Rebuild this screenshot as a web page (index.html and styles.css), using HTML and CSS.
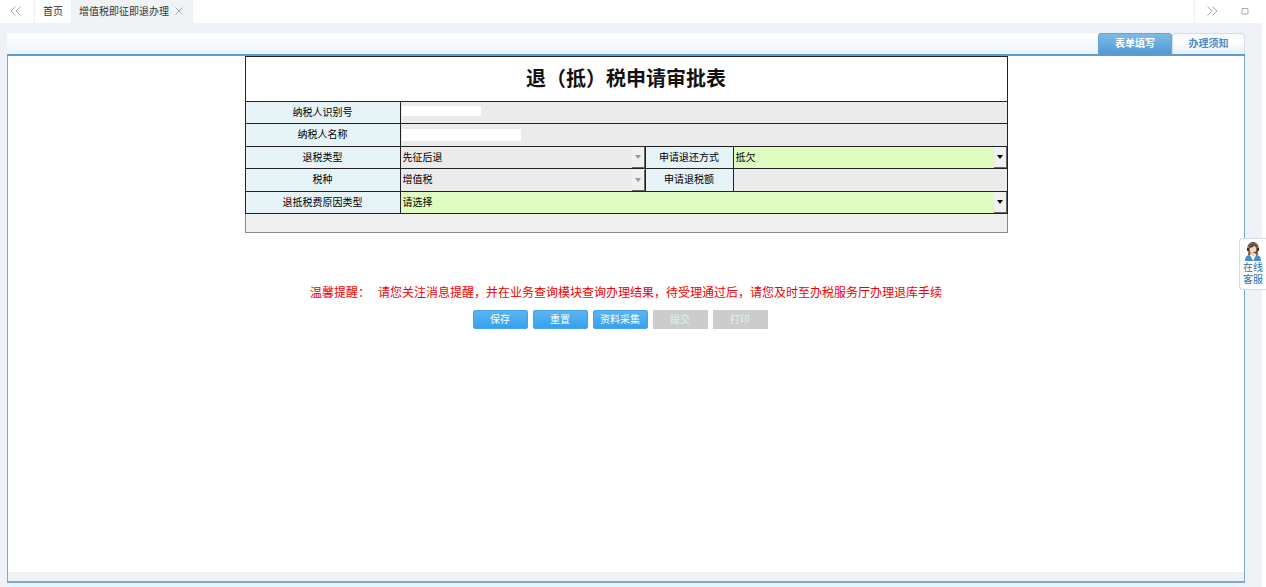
FILE: index.html
```html
<!DOCTYPE html>
<html lang="zh-CN">
<head>
<meta charset="utf-8">
<meta name="viewport" content="width=device-width, initial-scale=1">
<title>增值税即征即退办理</title>
<link rel="stylesheet" href="styles.css">
</head>
<body>
<header class="topbar">
  <button class="icon-btn scroll-left" type="button" aria-label="向左滚动">
    <svg width="12" height="10" viewBox="0 0 12 10"><path d="M5.500 .5 1 5l4.500 4.500M10.500 .5 6 5l4.500 4.500"/></svg>
  </button>
  <nav class="pages">
    <a class="page-tab" href="#">首页</a>
    <div class="page-tab current">
      <a href="#">增值税即征即退办理</a>
      <button class="icon-btn" type="button" aria-label="关闭">
        <svg width="8" height="8" viewBox="0 0 8 8"><path d="M.5 .5l7 7M7.500 .5l-7 7"/></svg>
      </button>
    </div>
  </nav>
  <div class="window-tools">
    <button class="icon-btn" type="button" aria-label="向右滚动">
      <svg width="12" height="10" viewBox="0 0 12 10"><path d="M1.500 .5 6 5l-4.500 4.500M6.500 .5 11 5l-4.500 4.500"/></svg>
    </button>
    <button class="icon-btn" type="button" aria-label="最大化">
      <svg width="8" height="8" viewBox="0 0 8 8"><path d="M1 1.500h6v5.500H1z"/></svg>
    </button>
  </div>
</header>

<div class="workspace">
  <nav class="form-tabs">
    <button class="form-tab active" type="button">表单填写</button>
    <button class="form-tab" type="button">办理须知</button>
  </nav>
  <main class="panel">
    <form class="sheet">
      <table class="form-table">
        <colgroup><col class="col-label"><col class="col-value"><col class="col-label2"><col></colgroup>
        <tbody>
          <tr class="title-row"><td colspan="4"><h1>退（抵）税申请审批表</h1></td></tr>
          <tr>
            <th><label for="taxpayer-id">纳税人识别号</label></th>
            <td colspan="3" class="readonly"><div class="field"><input id="taxpayer-id" class="masked" type="text" readonly></div></td>
          </tr>
          <tr>
            <th><label for="taxpayer-name">纳税人名称</label></th>
            <td colspan="3" class="readonly"><div class="field"><input id="taxpayer-name" class="masked wide" type="text" readonly></div></td>
          </tr>
          <tr>
            <th><label for="refund-type">退税类型</label></th>
            <td class="readonly"><div class="field"><select id="refund-type" disabled><option>先征后退</option></select><span class="arrow"></span></div></td>
            <th><label for="refund-mode">申请退还方式</label></th>
            <td class="editable"><div class="field"><select id="refund-mode"><option>抵欠</option></select><span class="arrow"></span></div></td>
          </tr>
          <tr>
            <th><label for="tax-kind">税种</label></th>
            <td class="readonly"><div class="field"><select id="tax-kind" disabled><option>增值税</option></select><span class="arrow"></span></div></td>
            <th><label for="amount">申请退税额</label></th>
            <td class="readonly"><div class="field"><input id="amount" type="text" readonly></div></td>
          </tr>
          <tr>
            <th><label for="reason">退抵税费原因类型</label></th>
            <td colspan="3" class="editable"><div class="field"><select id="reason"><option>请选择</option></select><span class="arrow"></span></div></td>
          </tr>
        </tbody>
      </table>
      <div class="table-foot"></div>
      <p class="notice"><span>温馨提醒：</span><span>请您关注消息提醒，并在业务查询模块查询办理结果，待受理通过后，请您及时至办税服务厅办理退库手续</span></p>
      <div class="actions">
        <button type="button">保存</button>
        <button type="reset">重置</button>
        <button type="button">资料采集</button>
        <button type="submit" disabled>提交</button>
        <button type="button" disabled>打印</button>
      </div>
    </form>
  </main>
</div>

<a class="service" href="#">
  <svg width="18" height="20" viewBox="0 0 18 20">
    <path d="M4.500 6C4.500 2.500 6 1 9 1s5 2 4.500 6l.5 6H4z" fill="#8a5a3c"/>
    <path d="M1 19c0-4 2-6 5-6h6c3 0 5 2 5 6z" fill="#3f8fd4"/>
    <path d="M6 13l3 6 3-6-1-2H7z" fill="#fff"/>
    <path d="M7.500 10h3v3L9 15l-1.500-2z" fill="#f0c39c"/>
    <ellipse cx="9" cy="7.500" rx="3.200" ry="4" fill="#f8d5b3"/>
    <path d="M5.500 6c2 0 4-1 5-2.500L12.500 6C12.500 3 11 2 9 2S5.500 3 5.500 6z" fill="#70452e"/>
    <path d="M4 7C3.500 2.500 6 .6 9 .6s5.500 2 5 6.400M13.500 8c0 2-1.500 2.500-4 2.500" fill="none" stroke="#333"/>
    <path d="M3 6h2v3H3zM13 6h2v3h-2z" fill="#333"/>
  </svg>
  <span>在线</span><span>客服</span>
</a>
</body>
</html>
```
FILE: styles.css
```css
* { box-sizing: border-box; }

body {
  margin: 0;
  min-height: 100vh;
  display: flex;
  flex-direction: column;
  background: #fff;
  color: #000;
  font: 10px/16px "Liberation Sans", "Noto Sans CJK SC", sans-serif;
}

button, input, select { font: inherit; color: inherit; margin: 0; }
button { cursor: pointer; }
a { color: inherit; text-decoration: none; }

/* Page tabs */
.topbar { display: flex; height: 23px; background: #fff; color: #333; }
.icon-btn {
  display: flex;
  align-items: center;
  justify-content: center;
  padding: 0 0 2px;
  border: 0;
  background: none;
}
.icon-btn svg { fill: none; stroke: #aaa; stroke-width: 1; }
.scroll-left { width: 34px; padding-right: 2px; }
.pages { display: flex; flex: 1; border-left: 1px solid #eee; }
.page-tab { display: flex; align-items: center; gap: 6px; padding: 0 8px; border-right: 1px solid #eee; }
.page-tab.current { background: #f0f3f6; padding: 0 9px 0 7px; }
.window-tools { display: flex; width: 72px; padding-right: 4px; border-left: 1px solid #eee; }
.window-tools .icon-btn { flex: 1; }

/* Workspace */
.workspace {
  flex: 1;
  display: flex;
  flex-direction: column;
  margin-right: 4px;
  padding: 10px 17px 4px 7px;
  background: #eef2f6;
}
.form-tabs {
  display: flex;
  justify-content: flex-end;
  height: 23px;
  border-bottom: 2px solid #5e9bd0;
  background: linear-gradient(#fff, #eaf4fd);
}
.form-tab {
  width: 73px;
  padding: 0;
  border: 1px solid #d2dfec;
  border-bottom: 0;
  border-radius: 3px 3px 0 0;
  background: linear-gradient(#f4f8fd, #fff 40%, #e4f0fb);
  color: #4a8bc8;
  font-weight: bold;
}
.form-tab.active { width: 74px; background: linear-gradient(#7dbbe6, #5399d3); border-color: #66a5d8; color: #fff; }

.panel {
  flex: 1;
  border: 1px solid #78a9d1;
  border-top: 0;
  border-bottom: 2px solid #78a9d1;
  background: #eef2f6;
  padding-bottom: 9px;
  display: flex;
}
.sheet { flex: 1; display: flex; flex-direction: column; align-items: center; background: #fff; }

/* Application form */
.form-table {
  width: 763px;
  max-width: 100%;
  border-collapse: collapse;
  table-layout: fixed;
  border: 1px solid #222;
}
.col-label { width: 155px; }
.col-value { width: 245px; }
.col-label2 { width: 88px; }
.form-table th, .form-table td { height: 23px; padding: 0; border: 1px solid #222; }
.form-table tr:nth-child(even) th, .form-table tr:nth-child(even) td { height: 22px; }
.form-table th { background: #e5f3f6; font-weight: normal; }
.form-table .title-row td { height: 45px; background: #fff; }
h1 { margin: 0; color: #111; font-size: 20px; line-height: 28px; text-align: center; }
.readonly { background: #ebebeb; }
.editable { background: #dffcc0; }

.field { position: relative; display: flex; height: 21px; }
.field input, .field select {
  width: 100%;
  padding: 0 2px;
  border: 0;
  border-radius: 0;
  background: none;
  appearance: none;
  opacity: 1;
}
.field select:disabled { color: #000; }
.field .masked { width: 79px; height: 10px; margin: 4px 0 0 1px; background: #fff; }
.field .masked.wide { width: 119px; height: 12px; }
.arrow {
  position: absolute;
  inset: 0 0 0 auto;
  width: 13px;
  display: flex;
  align-items: center;
  justify-content: center;
  background: #f0f0f0;
  border: solid #666;
  border-width: 0 1px 1px 0;
  pointer-events: none;
}
.arrow::before { content: ""; border: 3px solid transparent; border-top: 4px solid #000; border-bottom: 0; }
select:disabled + .arrow::before { border-top-color: #999; }
.table-foot { width: 763px; max-width: 100%; height: 19px; border: 1px solid #888; border-top: 0; background: #efefef; }

.notice { display: flex; gap: 8px; margin: 51px 0 0; font-size: 12px; line-height: 18px; color: #f00000; }
.actions { display: flex; gap: 5px; margin-top: 8px; padding-right: 12px; }
.actions button {
  width: 55px;
  height: 19px;
  padding: 0;
  border: 1px solid #45a3e6;
  border-radius: 2px;
  background: linear-gradient(#5bb4f1, #35a1ee);
  color: #fff;
}
.actions button:disabled { border-color: #ccc; border-radius: 0; background: #ccc; color: #d9f3f3; cursor: default; }

/* Floating customer service link */
.service {
  position: fixed;
  right: 0;
  top: 238px;
  width: 27px;
  padding: 3px 0;
  display: flex;
  flex-direction: column;
  align-items: center;
  border: 1px solid #d5dbe2;
  border-right: 0;
  border-radius: 4px 0 0 4px;
  background: #fff;
  color: #2c6cad;
  line-height: 12px;
}
```
